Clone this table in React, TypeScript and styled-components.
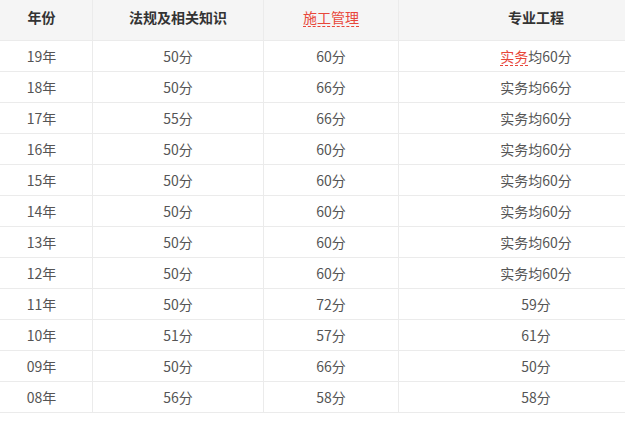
import React from 'react';
import styled, { createGlobalStyle } from 'styled-components';

const GlobalStyle = createGlobalStyle`
  html, body {
    margin: 0;
    padding: 0;
    background: #ffffff;
  }
  body {
    font-family: "Noto Sans CJK SC", "Microsoft YaHei", sans-serif;
    overflow: hidden;
  }
`;

type Row = {
  year: string;
  law: string;
  manage: string;
  major: string;
  practice?: boolean;
};

const rows: Row[] = [
  { year: '19年', law: '50分', manage: '60分', major: '60分', practice: true },
  { year: '18年', law: '50分', manage: '66分', major: '实务均66分' },
  { year: '17年', law: '55分', manage: '66分', major: '实务均60分' },
  { year: '16年', law: '50分', manage: '60分', major: '实务均60分' },
  { year: '15年', law: '50分', manage: '60分', major: '实务均60分' },
  { year: '14年', law: '50分', manage: '60分', major: '实务均60分' },
  { year: '13年', law: '50分', manage: '60分', major: '实务均60分' },
  { year: '12年', law: '50分', manage: '60分', major: '实务均60分' },
  { year: '11年', law: '50分', manage: '72分', major: '59分' },
  { year: '10年', law: '51分', manage: '57分', major: '61分' },
  { year: '09年', law: '50分', manage: '66分', major: '50分' },
  { year: '08年', law: '56分', manage: '58分', major: '58分' },
];

const App: React.FC = () => {
  return (
    <>
      <GlobalStyle />
      <Viewport>
        <Table>
          <HeadRow>
            <HeadCell>年份</HeadCell>
            <HeadCell>法规及相关知识</HeadCell>
            <HeadCell>
              <Marked light>施工管理</Marked>
            </HeadCell>
            <HeadCell>专业工程</HeadCell>
          </HeadRow>
          {rows.map((r) => (
            <BodyRow key={r.year}>
              <Cell>{r.year}</Cell>
              <Cell>{r.law}</Cell>
              <Cell>{r.manage}</Cell>
              <Cell>
                {r.practice ? (
                  <>
                    <Marked>实务</Marked>均{r.major}
                  </>
                ) : (
                  r.major
                )}
              </Cell>
            </BodyRow>
          ))}
        </Table>
      </Viewport>
    </>
  );
};

export default App;

// the table is wider than the window and scrolled a little to the right
const Viewport = styled.div`
  width: 625px;
  overflow: hidden;
`;

const Table = styled.div`
  width: 682px;
  margin-left: -9px;
  display: flex;
  flex-direction: column;
`;

const HeadRow = styled.div`
  display: grid;
  grid-template-columns: 101px 171px 135px 1fr;
  height: 41px;
  background: #f5f5f5;
  border-bottom: 1px solid #ebebeb;
  box-sizing: border-box;
`;

const BodyRow = styled(HeadRow)`
  height: 31px;
  background: #ffffff;
`;

const Cell = styled.div`
  display: flex;
  align-items: center;
  justify-content: center;
  font-size: 14px;
  color: #555555;
  line-height: 1;
  &:not(:first-child) {
    border-left: 1px solid #ebebeb;
  }
`;

const HeadCell = styled(Cell)`
  font-weight: bold;
  color: #333333;
  padding-bottom: 6px;
`;

const Marked = styled.span<{ light?: boolean }>`
  color: #e8473a;
  font-weight: ${({ light }) => (light ? 'normal' : 'inherit')};
  text-decoration: underline dashed #e8473a;
  text-underline-offset: 3px;
  text-decoration-thickness: 1px;
`;
